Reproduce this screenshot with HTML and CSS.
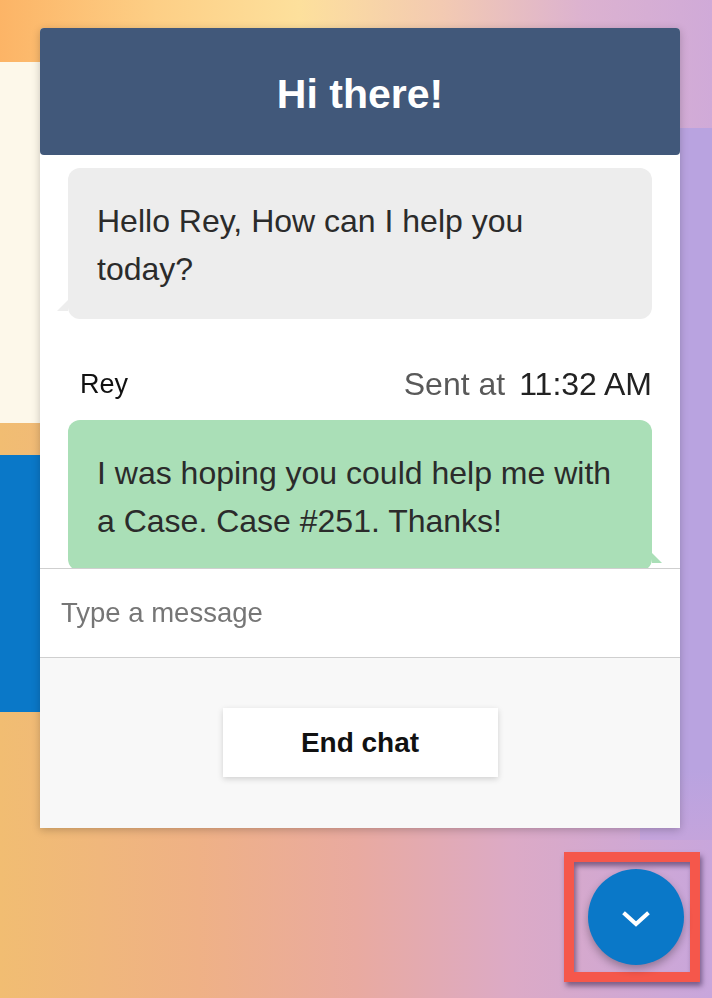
FILE: index.html
```html
<!DOCTYPE html>
<html lang="en">
<head>
  <meta charset="UTF-8">
  <meta name="viewport" content="width=device-width, initial-scale=1.0">
  <title>Chat</title>
  <link rel="stylesheet" href="styles.css">
</head>
<body>
  <div class="page">
    <div class="page-left">
      <div class="hero"></div>
      <div class="banner"></div>
    </div>
    <div class="page-right">
      <div class="side"></div>
    </div>
  </div>

  <div class="chat">
    <div class="chat-header">
      <h1>Hi there!</h1>
    </div>
    <div class="chat-body">
      <div class="bubble agent">Hello Rey, How can I help you today?</div>
      <div class="meta">
        <span class="meta-name">Rey</span>
        <span class="meta-time"><span class="sent">Sent at</span><span>11:32 AM</span></span>
      </div>
      <div class="bubble user">I was hoping you could help me with a Case. Case #251. Thanks!</div>
    </div>
    <div class="chat-input">
      <input type="text" placeholder="Type a message">
    </div>
    <div class="chat-footer">
      <button class="end-btn">End chat</button>
    </div>
  </div>

  <div class="highlight">
    <button class="fab" aria-label="Minimize">
      <svg width="28" height="18" viewBox="0 0 28 18">
        <polyline points="3,3 14,13 25,3" fill="none" stroke="#fff" stroke-width="4" stroke-linecap="square"/>
      </svg>
    </button>
  </div>
</body>
</html>
```

FILE: styles.css
```css
:root {
  --navy: #41587a;
  --blue: #0a78c8;
  --agent: #ededed;
  --user: #aadfb7;
  --text: #2b2b2b;
}
html, body {
  height: 100%;
}
body {
  margin: 0;
  font-family: 'Liberation Sans', Arial, sans-serif;
  background:
    linear-gradient(90deg, #fcb466 0%, #fdcf86 22%, #fde09c 42%, #f3cab2 62%, #dcb2d0 82%, #d0aad8 100%) top / 100% 128px no-repeat,
    linear-gradient(90deg, #f1bd72 0%, #efb186 28%, #e9aaa0 50%, #dcaac6 72%, #c8a6dc 100%);
  overflow: hidden;
}
.page {
  display: flex;
  height: 100%;
}
.page-left {
  width: 50%;
}
.hero {
  margin-top: 62px;
  height: 361px;
  background: #fdf8ea;
}
.banner {
  margin-top: 32px;
  height: 257px;
  background: var(--blue);
}
.page-right {
  flex: 1;
  display: flex;
  justify-content: flex-end;
}
.side {
  width: 72px;
  margin-top: 128px;
  height: 712px;
  background: linear-gradient(180deg, #b9a3e0 90%, #c4a4dc 100%);
}

.chat {
  position: fixed;
  left: 40px;
  top: 28px;
  width: 640px;
  height: 800px;
  display: flex;
  flex-direction: column;
  background: #fff;
  border-radius: 4px 4px 0 0;
  box-shadow: 0 2px 8px rgba(0,0,0,0.22);
}
.chat-header {
  height: 127px;
  flex-shrink: 0;
  background: var(--navy);
  border-radius: 4px;
  display: flex;
  align-items: center;
  justify-content: center;
  padding-top: 6px;
  box-sizing: border-box;
}
.chat-header h1 {
  margin: 0;
  color: #fff;
  font-size: 41px;
  font-weight: bold;
}
.chat-body {
  flex: 1;
  overflow: hidden;
  padding: 13px 28px 0;
}
.bubble {
  position: relative;
  padding: 29px 29px 26px;
  border-radius: 12px;
  font-size: 32px;
  line-height: 48px;
  color: var(--text);
}
.bubble.agent {
  background: var(--agent);
}
.bubble.agent::before {
  content: "";
  position: absolute;
  left: -11px;
  bottom: 8px;
  border-right: 11px solid var(--agent);
  border-top: 11px solid transparent;
}
.bubble.user {
  background: var(--user);
}
.bubble.user::after {
  content: "";
  position: absolute;
  right: -10px;
  bottom: 8px;
  border-left: 10px solid var(--user);
  border-top: 10px solid transparent;
}
.meta {
  display: flex;
  justify-content: space-between;
  align-items: center;
  margin: 47px 0 17px;
  padding-left: 12px;
  height: 37px;
}
.meta-name {
  font-size: 27px;
  color: #111;
}
.meta-time {
  display: flex;
  gap: 14px;
  font-size: 32px;
  color: #222;
}
.meta-time .sent {
  color: #595959;
}
.chat-input {
  flex-shrink: 0;
  height: 88px;
  border-top: 1px solid #cfcfcf;
  border-bottom: 1px solid #cfcfcf;
}
.chat-input input {
  width: 100%;
  height: 100%;
  box-sizing: border-box;
  border: none;
  outline: none;
  padding: 0 21px;
  font-family: inherit;
  font-size: 27.5px;
  color: #333;
  background: transparent;
}
.chat-input input::placeholder {
  color: #767676;
}
.chat-footer {
  flex-shrink: 0;
  height: 170px;
  box-sizing: border-box;
  background: #f8f8f8;
  display: flex;
  justify-content: center;
  padding-top: 50px;
}
.end-btn {
  width: 275px;
  height: 69px;
  border: none;
  background: #fff;
  font-family: inherit;
  font-size: 28px;
  font-weight: bold;
  color: #111;
  box-shadow: 0 2px 6px rgba(0,0,0,0.16);
  cursor: pointer;
}

.highlight {
  position: fixed;
  left: 564px;
  top: 852px;
  width: 136px;
  height: 130px;
  box-sizing: border-box;
  border: 10px solid #f5574b;
  box-shadow: 2px 4px 5px rgba(40,20,60,0.5), inset 2px 4px 5px rgba(40,20,60,0.5);
  display: flex;
  align-items: center;
  justify-content: center;
}
.fab {
  width: 96px;
  height: 96px;
  margin-left: 7px;
  border: none;
  border-radius: 50%;
  background: var(--blue);
  box-shadow: 0 4px 8px rgba(0,0,0,0.3);
  display: flex;
  align-items: center;
  justify-content: center;
  padding: 0;
  cursor: pointer;
}
.fab svg {
  margin-top: 6px;
}
```
